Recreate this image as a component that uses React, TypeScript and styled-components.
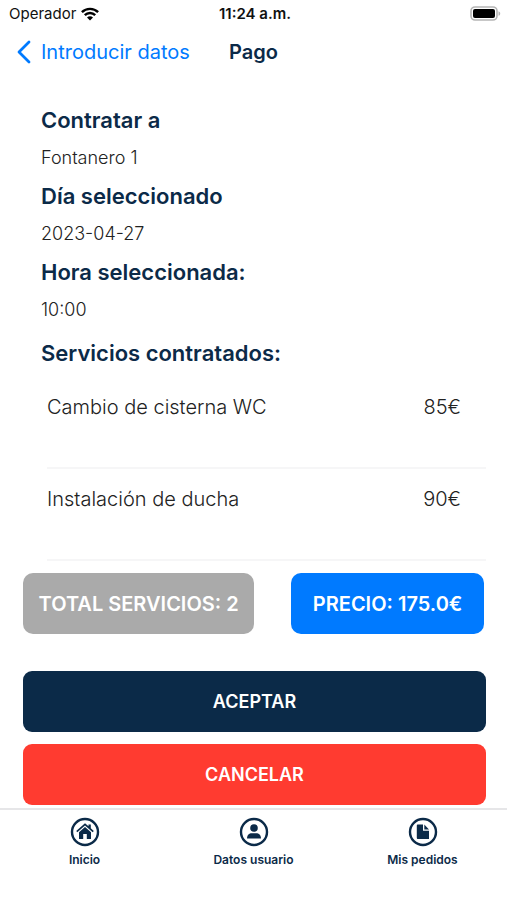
import React from "react";
import styled, { createGlobalStyle } from "styled-components";

const navy = "#0b2a48";
const blue = "#007aff";

const GlobalStyle = createGlobalStyle`
  * { box-sizing: border-box; }
  body { margin: 0; background: #fff; font-family: Inter, "Liberation Sans", sans-serif; color: ${navy}; }
  button { font-family: inherit; }
  h1, h2, dl, dt, dd, ul { margin: 0; padding: 0; }
`;

const Screen = styled.div`
  display: flex;
  flex-direction: column;
  min-height: 100vh;
`;

const StatusBar = styled.div`
  display: grid;
  grid-template-columns: 1fr auto 1fr;
  align-items: center;
  height: 27px;
  padding: 0 6px 0 9px;
  color: #111;
  font-size: 15px;
`;

const Carrier = styled.div`
  display: flex;
  align-items: center;
  gap: 5px;
`;

const Clock = styled.time`
  font-weight: 600;
`;

const BatteryIcon = styled.svg`
  justify-self: end;
`;

const NavBar = styled.header`
  display: grid;
  grid-template-columns: 1fr auto 1fr;
  align-items: center;
  height: 50px;
  padding: 0 16px;
`;

const BackLink = styled.a`
  display: flex;
  align-items: center;
  gap: 10px;
  color: ${blue};
  font-size: 20px;
  text-decoration: none;
  white-space: nowrap;
`;

const Title = styled.h1`
  font-size: 20px;
  font-weight: 600;
`;

const Main = styled.main`
  flex: 1;
  padding: 24px 21px 3px 23px;
`;

const Details = styled.dl`
  padding-left: 18px;
  line-height: 38px;
`;

const Term = styled.dt`
  font-size: 22px;
  font-weight: 600;
`;

const Value = styled.dd`
  color: #222;
  font-size: 18px;
  font-weight: 300;
`;

const SectionTitle = styled.h2`
  padding: 5px 0 5px 18px;
  font-size: 22px;
  font-weight: 600;
  line-height: 38px;
`;

const ServiceList = styled.ul`
  padding-left: 24px;
  list-style: none;
`;

const Service = styled.li`
  display: flex;
  justify-content: space-between;
  height: 92px;
  padding: 11px 25px 0 0;
  border-bottom: 2px solid #f6f6f7;
  color: #222;
  font-size: 20px;
  font-weight: 300;
  line-height: 38px;
`;

const Totals = styled.div`
  display: grid;
  grid-template-columns: 6fr 5fr;
  gap: 37px;
  padding: 12px 2px 37px 0;
`;

const Total = styled.div<{ $color: string }>`
  display: flex;
  align-items: center;
  justify-content: center;
  height: 61px;
  border-radius: 10px;
  background: ${(p) => p.$color};
  color: #fff;
  font-size: 20px;
  font-weight: 600;
  white-space: nowrap;
`;

const Actions = styled.div`
  display: grid;
  gap: 12px;
`;

const ActionButton = styled.button<{ $color: string }>`
  height: 61px;
  border: 0;
  border-radius: 9px;
  background: ${(p) => p.$color};
  color: #fff;
  font-size: 18px;
  font-weight: 600;
  cursor: pointer;
`;

const TabBar = styled.nav`
  display: grid;
  grid-template-columns: repeat(3, 1fr);
  height: 93px;
  padding-top: 7px;
  border-top: 2px solid #e6e6e8;
`;

const Tab = styled.a`
  display: flex;
  flex-direction: column;
  align-items: center;
  gap: 3px;
  color: ${navy};
  font-size: 12px;
  font-weight: 600;
  line-height: 20px;
  text-decoration: none;
`;

const TabIcon = ({ children }: { children: React.ReactNode }) => (
  <svg width="30" height="30" viewBox="0 0 30 30" fill="currentColor" aria-hidden="true">
    <circle cx="15" cy="15" r="13" fill="none" stroke="currentColor" strokeWidth="2.4" />
    {children}
  </svg>
);

const services = [
  { name: "Cambio de cisterna WC", price: "85€" },
  { name: "Instalación de ducha", price: "90€" },
];

export default function App() {
  return (
    <Screen>
      <GlobalStyle />
      <StatusBar>
        <Carrier>
          Operador
          <svg width="18" height="14" viewBox="0 0 18 14" fill="none" stroke="#000" strokeWidth="2.4" aria-label="Wi-Fi">
            <path d="M0.9 5.2C5.4 .7 12.6 .7 17.1 5.2M3.8 8.2c2.9-2.9 7.5-2.9 10.4 0" />
            <path d="M6 10.5c1.7-1.6 4.3-1.6 6 0L9 13.5z" fill="#000" stroke="none" />
          </svg>
        </Carrier>
        <Clock>11:24 a.m.</Clock>
        <BatteryIcon width="31" height="15" viewBox="0 0 31 15" aria-label="Batería">
          <rect x="1" y="1" width="26" height="13" rx="4" fill="#fff" stroke="#b5b5b5" strokeWidth="1.6" />
          <rect x="3" y="3" width="22" height="9" rx="2" fill="#000" />
          <path d="M28.5 5.2c2.3.8 2.3 3.8 0 4.6z" fill="#b5b5b5" />
        </BatteryIcon>
      </StatusBar>
      <NavBar>
        <BackLink href="#datos">
          <svg width="15" height="24" viewBox="0 0 15 24" fill="none" stroke="currentColor" strokeWidth="2.8" strokeLinecap="round" strokeLinejoin="round" aria-hidden="true">
            <path d="M13 2 3 12l10 10" />
          </svg>
          Introducir datos
        </BackLink>
        <Title>Pago</Title>
      </NavBar>
      <Main>
        <Details>
          <Term>Contratar a</Term>
          <Value>Fontanero 1</Value>
          <Term>Día seleccionado</Term>
          <Value>2023-04-27</Value>
          <Term>Hora seleccionada:</Term>
          <Value>10:00</Value>
        </Details>
        <SectionTitle>Servicios contratados:</SectionTitle>
        <ServiceList>
          {services.map((s) => (
            <Service key={s.name}>
              <span>{s.name}</span>
              <span>{s.price}</span>
            </Service>
          ))}
        </ServiceList>
        <Totals>
          <Total $color="#aaaaaa">TOTAL SERVICIOS: 2</Total>
          <Total $color={blue}>PRECIO: 175.0€</Total>
        </Totals>
        <Actions>
          <ActionButton type="button" $color={navy}>ACEPTAR</ActionButton>
          <ActionButton type="button" $color="#ff3b30">CANCELAR</ActionButton>
        </Actions>
      </Main>
      <TabBar>
        <Tab href="#inicio">
          <TabIcon>
            <path d="M15 6.2 6.2 14l1.1 1.2L15 8.5l7.7 6.7 1.1-1.2-3-2.7V7.5h-2.3v1.8z" />
            <path d="M9 15.2 15 10l6 5.2V22h-4.2v-5h-3.6v5H9z" />
          </TabIcon>
          Inicio
        </Tab>
        <Tab href="#usuario">
          <TabIcon>
            <circle cx="15" cy="11" r="3.8" />
            <path d="M8 21.5c0-3.5 2.2-5.3 4.7-5.3h4.6c2.5 0 4.7 1.8 4.7 5.3z" />
          </TabIcon>
          Datos usuario
        </Tab>
        <Tab href="#pedidos">
          <TabIcon>
            <path d="M10 7.5h5v6.3h6V22H10c-.8 0-1.2-.4-1.2-1.2V8.7c0-.8.4-1.2 1.2-1.2z" />
            <path d="M16.3 7.5 21 12.5h-4.7z" />
          </TabIcon>
          Mis pedidos
        </Tab>
      </TabBar>
    </Screen>
  );
}
